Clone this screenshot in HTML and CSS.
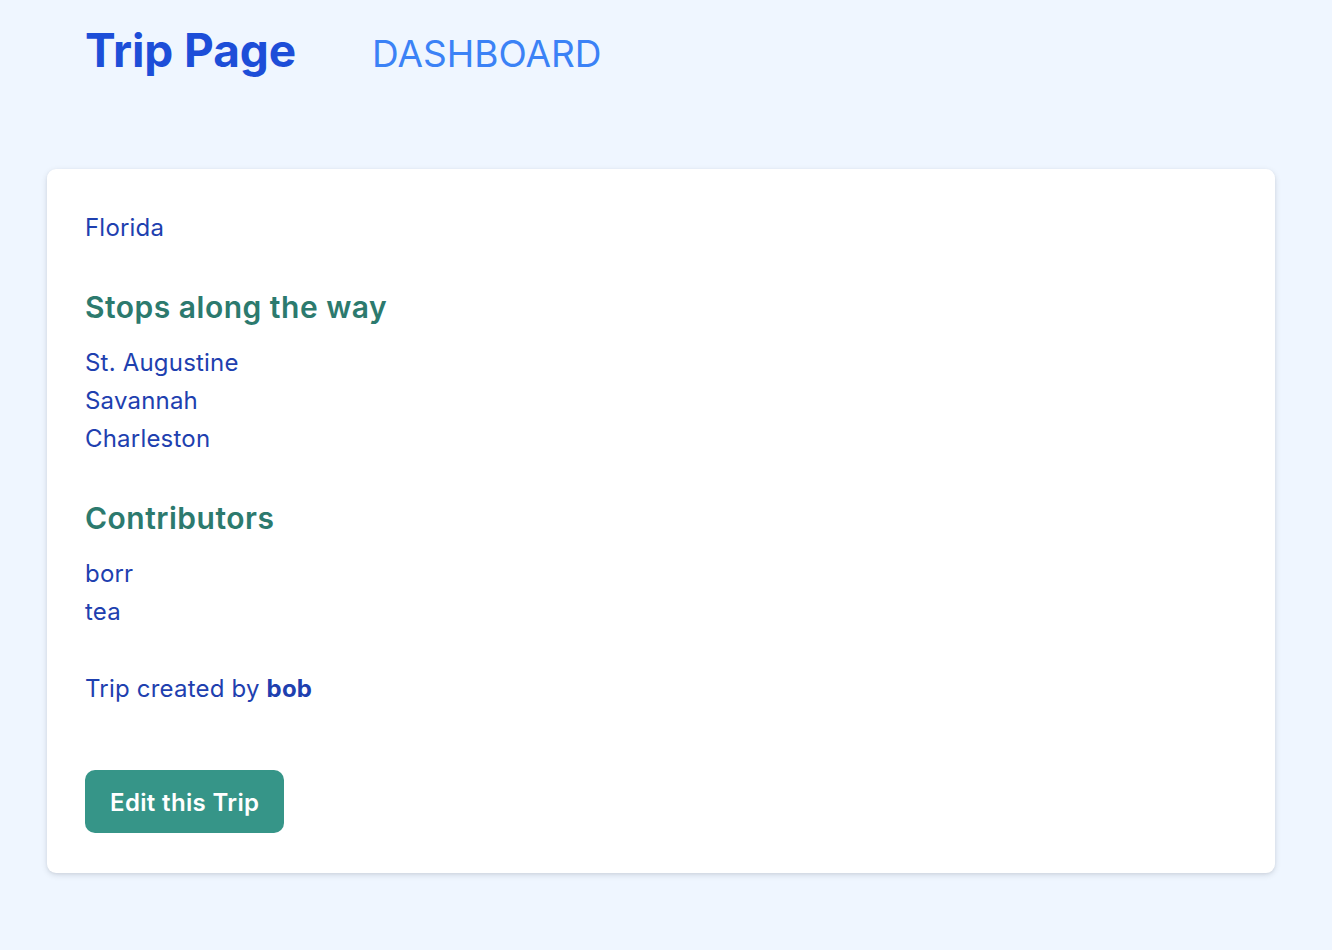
FILE: index.html
```html
<!DOCTYPE html>
<html lang="en">
<head>
<meta charset="utf-8">
<title>Trip Page</title>
<link rel="stylesheet" href="styles.css">
</head>
<body>
<header class="topbar">
  <h1 class="brand">Trip Page</h1>
  <a class="nav-link" href="#">DASHBOARD</a>
</header>
<main class="card">
  <p class="destination">Florida</p>
  <h2 class="section-title">Stops along the way</h2>
  <ul class="plain-list">
    <li>St. Augustine</li>
    <li>Savannah</li>
    <li>Charleston</li>
  </ul>
  <h2 class="section-title">Contributors</h2>
  <ul class="plain-list">
    <li>borr</li>
    <li>tea</li>
  </ul>
  <p class="creator">Trip created by <strong>bob</strong></p>
  <button class="edit-btn" type="button">Edit this Trip</button>
</main>
</body>
</html>
```

FILE: styles.css
```css
* { box-sizing: border-box; }

html, body {
  margin: 0;
  padding: 0;
}

body {
  background: #eff6ff;
  font-family: Inter, "Noto Sans", "Liberation Sans", sans-serif;
  color: #1e40af;
  min-height: 950px;
}

.topbar {
  display: flex;
  align-items: baseline;
  gap: 76px;
  padding: 22px 0 0 86px;
  height: 169px;
}

.brand {
  margin: 0 0 0 -1px;
  font-size: 46px;
  line-height: 56px;
  font-weight: 700;
  color: #1d4ed8;
  letter-spacing: -0.1px;
}

.nav-link {
  font-size: 37px;
  line-height: 56px;
  font-weight: 400;
  color: #3b82f6;
  text-decoration: none;
}

.card {
  width: 1228px;
  margin-left: 47px;
  background: #ffffff;
  border-radius: 9px;
  box-shadow: 0 2px 6px rgba(15, 23, 42, 0.12), 0 1px 3px rgba(15, 23, 42, 0.06);
  padding: 39px 39px 40px 38px;
  font-size: 24px;
  line-height: 38px;
  letter-spacing: 0.2px;
}

.destination {
  margin: 0;
  padding-top: 1px;
}

.section-title {
  margin: 39px 0 16px;
  font-size: 30px;
  line-height: 42px;
  font-weight: 600;
  color: #2c7a6e;
  letter-spacing: 0.5px;
}

.plain-list {
  list-style: none;
  margin: 0;
  padding: 0;
}

.creator {
  margin: 39px 0 0;
}

.creator strong {
  font-weight: 700;
}

.edit-btn {
  display: block;
  margin-top: 62px;
  height: 63px;
  padding: 2px 25px 0;
  border: none;
  border-radius: 10px;
  background: #369588;
  color: #ffffff;
  font-family: inherit;
  font-size: 24px;
  font-weight: 600;
  line-height: 61px;
  letter-spacing: 0.35px;
  cursor: pointer;
}
```
